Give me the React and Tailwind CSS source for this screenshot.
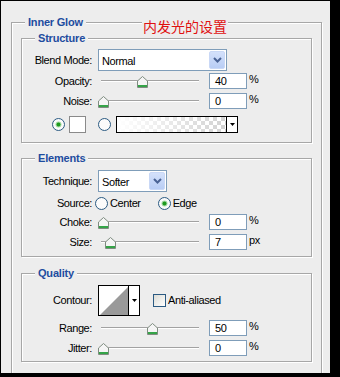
import React from "react";

const Label = ({ children }) => (
  <div className="w-[70px] shrink-0 text-right whitespace-nowrap">{children}</div>
);

const Num = ({ v }) => (
  <div className="w-[38px] h-[16px] border border-[#7f9db9] bg-white text-[11px] leading-[14px] pl-[5px] shrink-0">
    {v}
  </div>
);

const Thumb = () => (
  <svg width="11" height="12" viewBox="0 0 11 12">
    <path d="M5.5 0.5 L10.5 5 V11.5 H0.5 V5 Z" fill="#f5f5f5" stroke="#7f8c80" />
    <rect x="1" y="9" width="9" height="2" fill="#35a448" />
  </svg>
);

const Radio = ({ checked }) => (
  <svg width="13" height="13" viewBox="0 0 13 13" className="shrink-0">
    <circle cx="6.5" cy="6.5" r="6" fill="#fbfbfb" stroke="#2b5a82" />
    {checked && <circle cx="6.5" cy="6.5" r="3" fill="#a6dba6" />}
    {checked && <circle cx="6.5" cy="6.5" r="2" fill="#1f9a1f" />}
  </svg>
);

const Chevron = () => (
  <svg width="9" height="6" viewBox="0 0 9 6">
    <path d="M1 1 L4.5 4.5 L8 1" fill="none" stroke="#4a6395" strokeWidth="2" />
  </svg>
);

const Select = ({ w, text }) => (
  <div className={`ml-[6px] ${w} h-[22px] border border-[#7f9db9] bg-white flex items-center shrink-0`}>
    <span className="pl-[3px] pt-[2px] flex-1">{text}</span>
    <div className="w-[16px] h-[18px] mr-[1px] rounded-[2px] border border-[#c9d8f6] bg-gradient-to-b from-[#d4e1fb] to-[#b8cdf5] flex items-center justify-center">
      <Chevron />
    </div>
  </div>
);

const SliderRow = ({ label, v, unit, pos, cls = "" }) => (
  <div className={`flex items-center h-[16px] ${cls}`}>
    <Label>{label}</Label>
    <div className="ml-[5px] relative w-[106px] h-[16px] shrink-0">
      <div className="absolute left-[4px] top-[7px] w-[98px] h-[1px] bg-[#a2a2a2]" />
      <div className="absolute left-[4px] top-[8px] w-[98px] h-[1px] bg-white" />
      <div className="absolute top-[3px]" style={{ left: pos }}>
        <Thumb />
      </div>
    </div>
    <div className="ml-[6px]">
      <Num v={v} />
    </div>
    <span className="ml-[2px] self-start leading-[12px]">{unit}</span>
  </div>
);

const Group = ({ title, cls, children }) => (
  <div className={`relative w-[291px] border border-[#a7a7a7] shadow-[inset_1px_1px_0_#fff,1px_1px_0_#fff] ${cls}`}>
    <span className="absolute left-[13px] top-[-8px] px-[3px] bg-[#ededed] font-bold text-[#1d4c9f] leading-[14px] tracking-[-0.2px]">
      {title}
    </span>
    {children}
  </div>
);

export default function App() {
  return (
    <div className="w-[340px] h-[377px] bg-black pt-[1px] pl-[1px] font-['Liberation_Sans',Arial,sans-serif] text-[11px] tracking-[-0.4px] text-black">
      <div className="w-[329px] h-[372px] bg-[#ededed] overflow-hidden pl-[10px] pt-[21px]">
        <div className="relative w-[311px] h-[400px] border border-[#a7a7a7] shadow-[inset_1px_1px_0_#fff,1px_1px_0_#fff] pt-[15px] px-[9px]">
          <span className="absolute left-[13px] top-[-8px] px-[3px] bg-[#ededed] font-bold text-[#1d4c9f] leading-[14px] tracking-[-0.2px]">
            Inner Glow
          </span>
          <span className="absolute left-[130px] top-[-6px] px-[1px] bg-[#ededed] text-[#e01010] text-[14px] leading-[18px] tracking-normal font-['Noto_Sans_CJK_SC',sans-serif]">
            内发光的设置
          </span>

          {/* Structure */}
          <Group title="Structure" cls="h-[105px] pt-[10px]">
            <div className="flex items-center h-[22px]">
              <Label>Blend Mode:</Label>
              <Select w="w-[129px]" text="Normal" />
            </div>
            <SliderRow label="Opacity:" v="40" unit="%" pos={40} cls="mt-[2px]" />
            <SliderRow label="Noise:" v="0" unit="%" pos={1} cls="mt-[4px]" />
            <div className="flex items-center h-[17px] mt-[7px]">
              <div className="ml-[30px]">
                <Radio checked />
              </div>
              <div className="ml-[4px] w-[17px] h-[17px] border border-[#8a8a8a] bg-white shadow-[inset_0_0_0_1px_#fff]" />
              <div className="ml-[12px]">
                <Radio />
              </div>
              <div className="ml-[5px] w-[122px] h-[17px] border border-black flex bg-white">
                <svg width="109" height="15" className="shrink-0">
                  <defs>
                    <pattern id="chk" width="8" height="8" patternUnits="userSpaceOnUse">
                      <rect width="8" height="8" fill="#ffffff" />
                      <rect width="4" height="4" fill="#d2d2d2" />
                      <rect x="4" y="4" width="4" height="4" fill="#d2d2d2" />
                    </pattern>
                    <linearGradient id="fade" x1="0" x2="1" y1="0" y2="0">
                      <stop offset="0" stopColor="#fff" stopOpacity="1" />
                      <stop offset="1" stopColor="#fff" stopOpacity="0" />
                    </linearGradient>
                  </defs>
                  <rect width="109" height="15" fill="url(#chk)" />
                  <rect width="109" height="15" fill="url(#fade)" />
                </svg>
                <div className="w-[1px] h-[15px] bg-black" />
                <div className="flex-1 flex items-center justify-center">
                  <svg width="5" height="3" viewBox="0 0 5 3">
                    <path d="M0 0 H5 L2.5 3 Z" fill="#000" />
                  </svg>
                </div>
              </div>
            </div>
          </Group>

          {/* Elements */}
          <Group title="Elements" cls="h-[99px] mt-[15px] pt-[11px]">
            <div className="flex items-center h-[22px]">
              <Label>Technique:</Label>
              <Select w="w-[69px]" text="Softer" />
            </div>
            <div className="flex items-center h-[14px] mt-[4px]">
              <Label>Source:</Label>
              <div className="ml-[3px]">
                <Radio />
              </div>
              <span className="ml-[2px]">Center</span>
              <div className="ml-[17px]">
                <Radio checked />
              </div>
              <span className="ml-[2px]">Edge</span>
            </div>
            <SliderRow label="Choke:" v="0" unit="%" pos={1} cls="mt-[4px]" />
            <SliderRow label="Size:" v="7" unit="px" pos={8} cls="mt-[4px]" />
          </Group>

          {/* Quality */}
          <Group title="Quality" cls="h-[89px] mt-[16px] pt-[11px]">
            <div className="flex items-center h-[31px]">
              <Label>Contour:</Label>
              <div className="ml-[6px] w-[42px] h-[31px] border border-black bg-white flex shrink-0">
                <svg width="29" height="29" className="shrink-0">
                  <polygon points="1,29 29,1 29,29" fill="#9a9a9a" />
                </svg>
                <div className="w-[1px] h-[29px] bg-black" />
                <div className="flex-1 flex items-center justify-center">
                  <svg width="5" height="3" viewBox="0 0 5 3">
                    <path d="M0 0 H5 L2.5 3 Z" fill="#000" />
                  </svg>
                </div>
              </div>
              <div className="ml-[13px] w-[13px] h-[13px] border border-[#2b5a82] bg-gradient-to-br from-[#dcdcd6] to-white shrink-0" />
              <span className="ml-[2px]">Anti-aliased</span>
            </div>
            <SliderRow label="Range:" v="50" unit="%" pos={50} cls="mt-[4px]" />
            <SliderRow label="Jitter:" v="0" unit="%" pos={1} cls="mt-[4px]" />
          </Group>
        </div>
      </div>
    </div>
  );
}
